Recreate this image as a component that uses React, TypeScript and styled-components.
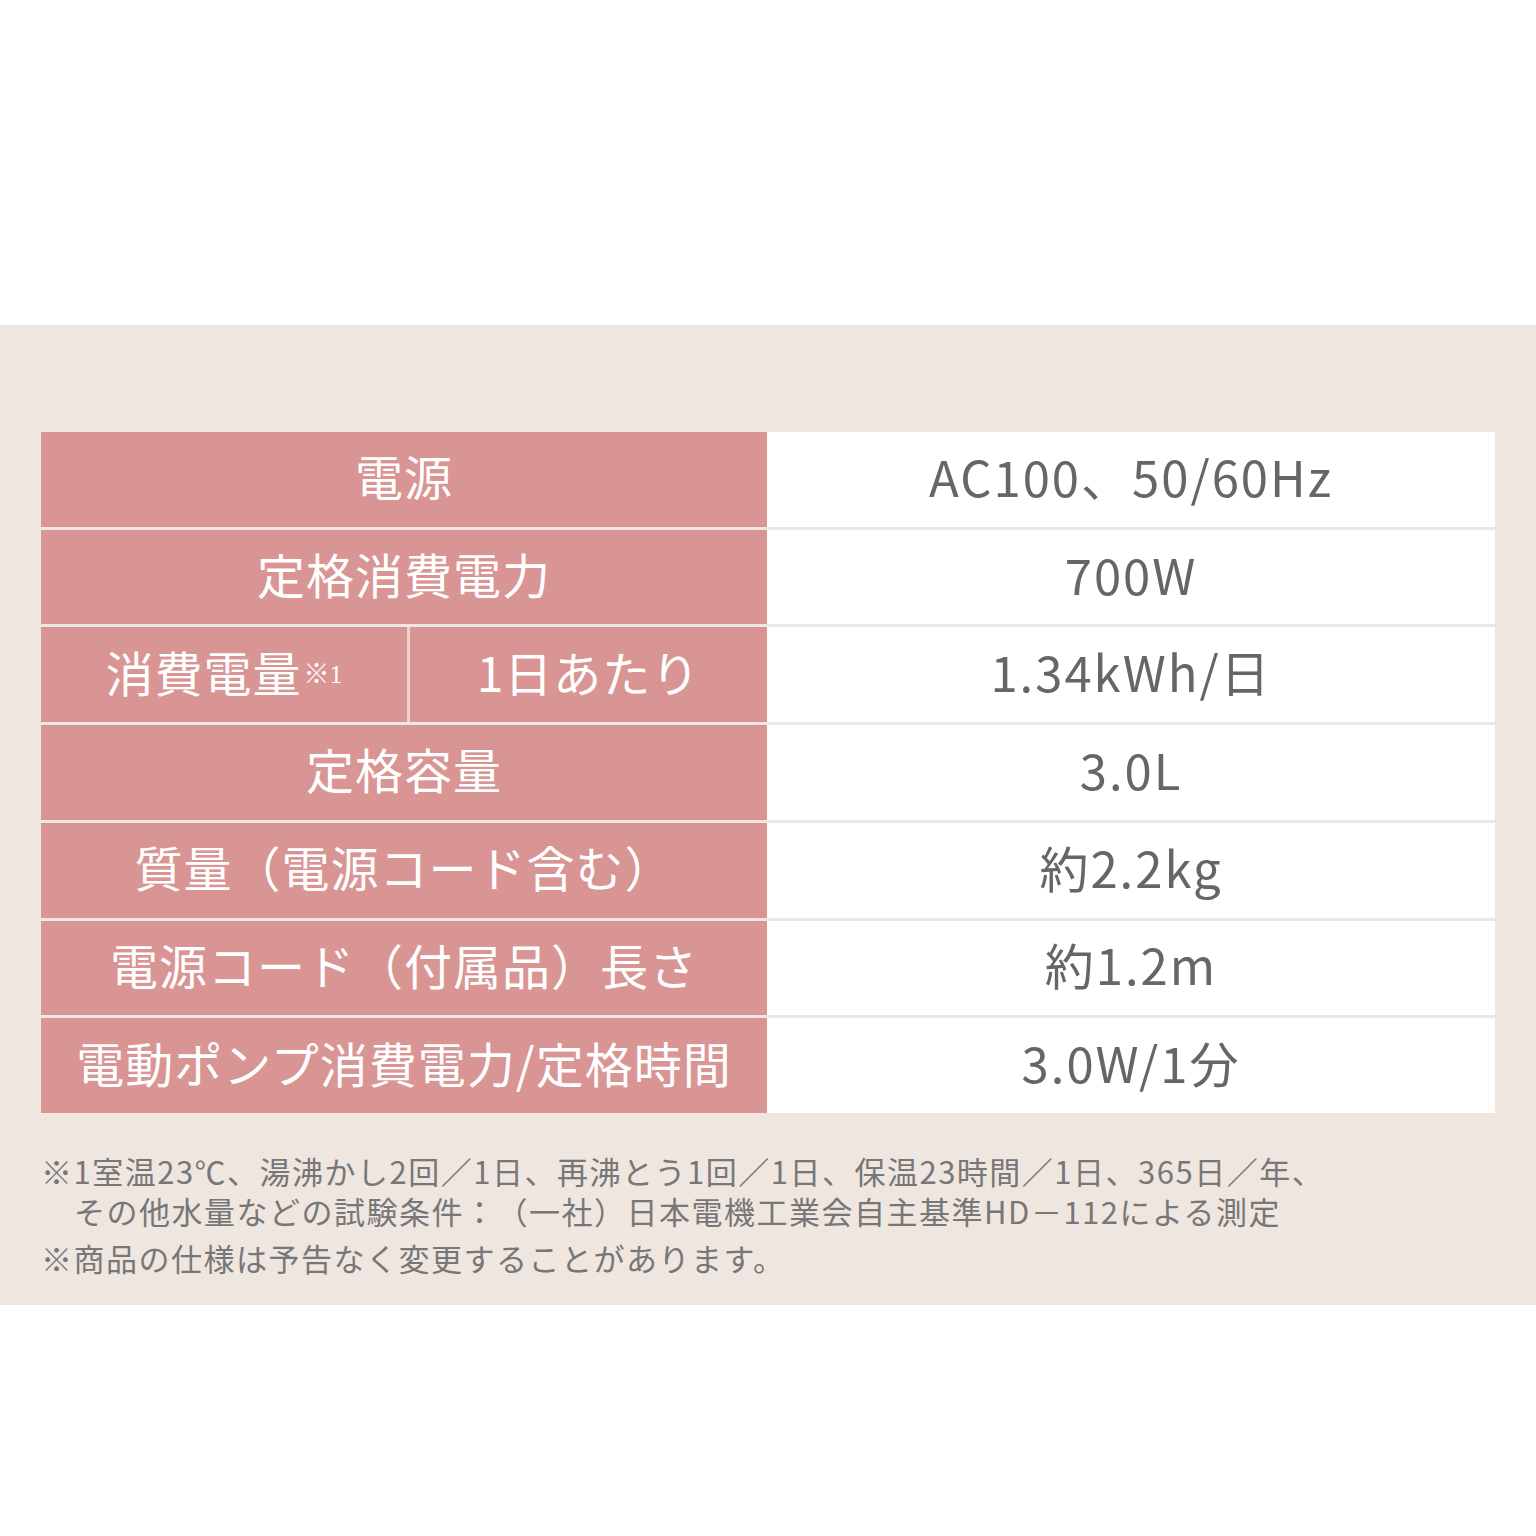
import styled, { createGlobalStyle } from "styled-components"

const GlobalStyle = createGlobalStyle`
  html, body {
    margin: 0;
    padding: 0;
    background: #fff;
  }
  body {
    font-family: "Noto Sans CJK JP", "Noto Sans", sans-serif;
    text-spacing-trim: space-all;
  }
`

type Row = {
  label?: string
  sub?: [string, string]
  value: string
}

const rows: Row[] = [
  { label: "電源", value: "AC100、50/60Hz" },
  { label: "定格消費電力", value: "700W" },
  { sub: ["消費電量", "1日あたり"], value: "1.34kWh/日" },
  { label: "定格容量", value: "3.0L" },
  { label: "質量（電源コード含む）", value: "約2.2kg" },
  { label: "電源コード（付属品）長さ", value: "約1.2m" },
  { label: "電動ポンプ消費電力/定格時間", value: "3.0W/1分" },
]

const App = () => {
  return (
    <>
      <GlobalStyle />
      <Page>
        <TopSpace />
        <Band>
          <SpecTable>
            {rows.map((r, i) => (
              <SpecRow key={i}>
                {r.sub ? (
                  <SplitLabel>
                    <LabelCell>
                      {r.sub[0]}
                      <Mark>※1</Mark>
                    </LabelCell>
                    <LabelCell>{r.sub[1]}</LabelCell>
                  </SplitLabel>
                ) : (
                  <LabelCell>{r.label}</LabelCell>
                )}
                <ValueCell>{r.value}</ValueCell>
              </SpecRow>
            ))}
          </SpecTable>
          <Notes>
            <NoteLine>※1室温23℃、湯沸かし2回／1日、再沸とう1回／1日、保温23時間／1日、365日／年、</NoteLine>
            <NoteLine $indent>その他水量などの試験条件：（一社）日本電機工業会自主基準HD－112による測定</NoteLine>
            <NoteLine $gap>※商品の仕様は予告なく変更することがあります。</NoteLine>
          </Notes>
        </Band>
        <BottomSpace />
      </Page>
    </>
  )
}

export default App

const Page = styled.div`
  width: 1536px;
  display: flex;
  flex-direction: column;
`

const TopSpace = styled.div`
  height: 325px;
  background: #fff;
`

const BottomSpace = styled.div`
  height: 231px;
  background: #fff;
`

const Band = styled.section`
  background: #efe6e0;
  padding: 107px 41px 27px 41px;
`

const SpecTable = styled.div`
  height: 681px;
  display: grid;
  grid-template-rows: repeat(7, 1fr);
  row-gap: 3px;
  background: #efe7e2;
`

const SpecRow = styled.div`
  display: grid;
  grid-template-columns: 726px 1fr;
`

const SplitLabel = styled.div`
  display: grid;
  grid-template-columns: 366px 1fr;
  column-gap: 3px;
  background: #edd3cf;
`

const LabelCell = styled.div`
  background: #d99594;
  color: #fff;
  font-size: 48px;
  line-height: 1;
  letter-spacing: 1px;
  display: flex;
  align-items: center;
  justify-content: center;
  white-space: nowrap;
  padding-bottom: 8px;
`

const Mark = styled.span`
  font-family: "Liberation Serif", "Noto Sans CJK JP", serif;
  font-size: 26px;
  letter-spacing: 0;
  align-self: flex-end;
  margin-bottom: 26px;
  margin-left: 2px;
`

const ValueCell = styled.div`
  background: #fff;
  color: #666;
  font-size: 49px;
  line-height: 1;
  letter-spacing: 2px;
  display: flex;
  align-items: center;
  justify-content: center;
  white-space: nowrap;
  padding-bottom: 8px;
`

const Notes = styled.div`
  padding-top: 38px;
  color: #777;
  font-size: 31px;
  line-height: 40px;
  letter-spacing: 1.5px;
  display: flex;
  flex-direction: column;
`

const NoteLine = styled.p<{ $gap?: boolean; $indent?: boolean }>`
  margin: ${(p) => (p.$gap ? "7px" : "0")} 0 0 0;
  padding-left: ${(p) => (p.$indent ? "33px" : "0")};
  height: 40px;
  white-space: nowrap;
`
